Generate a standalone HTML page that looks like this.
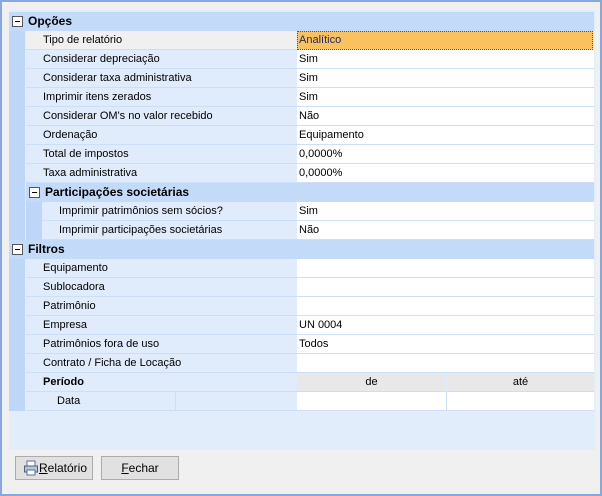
<html><head><style>
body{margin:0;width:602px;height:496px;background:#f0f0f0;font-family:"Liberation Sans",sans-serif;font-size:11px;color:#000;position:relative;overflow:hidden}
.b{position:absolute;left:0;top:0;width:598px;height:492px;border:2px solid #86a8dc}
.p{position:absolute;left:9px;top:10px;width:586px;height:440px;background:#e2edfc}
.bar{position:absolute;background:#bed7f8}
.r{position:absolute;height:18px;line-height:18px;border-bottom:1px solid #cddff6}
.l{background:#e0ebfb}
.v{background:#fff}
.h{position:absolute;background:#c3dbf9;height:19px;line-height:19px;font-weight:bold;font-size:12px}
.m{position:absolute;width:9px;height:9px;border:1px solid #555;background:#fff;top:4px}
.m:after{content:"";position:absolute;left:2px;top:4px;width:5px;height:1px;background:#000}
.btn{position:absolute;top:456px;height:22px;border:1px solid #adadad;background:#e1e1e1;line-height:22px;text-align:center;font-size:12px}
u{text-decoration:underline}
</style></head><body>
<div class="b"></div>
<div class="p"></div>
<div class="bar" style="left:9px;top:31px;width:16px;height:380px"></div>
<div class="bar" style="left:26px;top:202px;width:16px;height:38px"></div>

<div class="h" style="left:9px;top:12px;width:585px"><div class="m" style="left:3px"></div><span style="position:absolute;left:19px">Opções</span></div>

<div class="r l" style="left:26px;top:31px;width:271px;background:#f0f0f0"><span style="margin-left:17px">Tipo de relatório</span></div>
<div class="r" style="left:297px;top:31px;width:296px;background:#f9c25e;outline:1px dotted #555;outline-offset:-1px"><span style="margin-left:2px;color:#1c2a6a">Analítico</span></div>

<div id="rows"></div>
<script></script>

<div class="r l" style="left:26px;top:50px;width:271px"><span style="margin-left:17px">Considerar depreciação</span></div><div class="r v" style="left:297px;top:50px;width:297px"><span style="margin-left:2px">Sim</span></div>
<div class="r l" style="left:26px;top:69px;width:271px"><span style="margin-left:17px">Considerar taxa administrativa</span></div><div class="r v" style="left:297px;top:69px;width:297px"><span style="margin-left:2px">Sim</span></div>
<div class="r l" style="left:26px;top:88px;width:271px"><span style="margin-left:17px">Imprimir itens zerados</span></div><div class="r v" style="left:297px;top:88px;width:297px"><span style="margin-left:2px">Sim</span></div>
<div class="r l" style="left:26px;top:107px;width:271px"><span style="margin-left:17px">Considerar OM's no valor recebido</span></div><div class="r v" style="left:297px;top:107px;width:297px"><span style="margin-left:2px">Não</span></div>
<div class="r l" style="left:26px;top:126px;width:271px"><span style="margin-left:17px">Ordenação</span></div><div class="r v" style="left:297px;top:126px;width:297px"><span style="margin-left:2px">Equipamento</span></div>
<div class="r l" style="left:26px;top:145px;width:271px"><span style="margin-left:17px">Total de impostos</span></div><div class="r v" style="left:297px;top:145px;width:297px"><span style="margin-left:2px">0,0000%</span></div>
<div class="r l" style="left:26px;top:164px;width:271px"><span style="margin-left:17px">Taxa administrativa</span></div><div class="r v" style="left:297px;top:164px;width:297px"><span style="margin-left:2px">0,0000%</span></div>

<div class="h" style="left:26px;top:183px;width:568px"><div class="m" style="left:3px"></div><span style="position:absolute;left:19px">Participações societárias</span></div>
<div class="r l" style="left:42px;top:202px;width:255px"><span style="margin-left:17px">Imprimir patrimônios sem sócios?</span></div><div class="r v" style="left:297px;top:202px;width:297px"><span style="margin-left:2px">Sim</span></div>
<div class="r l" style="left:42px;top:221px;width:255px"><span style="margin-left:17px">Imprimir participações societárias</span></div><div class="r v" style="left:297px;top:221px;width:297px"><span style="margin-left:2px">Não</span></div>

<div class="h" style="left:9px;top:240px;width:585px"><div class="m" style="left:3px"></div><span style="position:absolute;left:19px">Filtros</span></div>
<div class="r l" style="left:26px;top:259px;width:271px"><span style="margin-left:17px">Equipamento</span></div><div class="r v" style="left:297px;top:259px;width:297px"></div>
<div class="r l" style="left:26px;top:278px;width:271px"><span style="margin-left:17px">Sublocadora</span></div><div class="r v" style="left:297px;top:278px;width:297px"></div>
<div class="r l" style="left:26px;top:297px;width:271px"><span style="margin-left:17px">Patrimônio</span></div><div class="r v" style="left:297px;top:297px;width:297px"></div>
<div class="r l" style="left:26px;top:316px;width:271px"><span style="margin-left:17px">Empresa</span></div><div class="r v" style="left:297px;top:316px;width:297px"><span style="margin-left:2px">UN 0004</span></div>
<div class="r l" style="left:26px;top:335px;width:271px"><span style="margin-left:17px">Patrimônios fora de uso</span></div><div class="r v" style="left:297px;top:335px;width:297px"><span style="margin-left:2px">Todos</span></div>
<div class="r l" style="left:26px;top:354px;width:271px"><span style="margin-left:17px">Contrato / Ficha de Locação</span></div><div class="r v" style="left:297px;top:354px;width:297px"></div>
<div class="r l" style="left:26px;top:373px;width:271px;font-weight:bold"><span style="margin-left:17px">Período</span></div>
<div class="r" style="left:297px;top:373px;width:149px;background:#e8e8e8;text-align:center">de</div>
<div class="r" style="left:447px;top:373px;width:147px;background:#e8e8e8;text-align:center">até</div>
<div class="r l" style="left:26px;top:392px;width:149px;border-right:1px solid #cddff6"><span style="margin-left:31px">Data</span></div>
<div class="r l" style="left:176px;top:392px;width:121px"></div>
<div class="r v" style="left:297px;top:392px;width:149px;border-right:1px solid #cddff6"></div>
<div class="r v" style="left:447px;top:392px;width:147px"></div>

<div class="btn" style="left:15px;width:76px"><svg width="16" height="16" style="position:absolute;left:7px;top:3px" viewBox="0 0 16 16"><rect x="4" y="1" width="8" height="5" fill="#fff" stroke="#5570a0"/><rect x="1.5" y="6" width="13" height="6" fill="#b8c4d8" stroke="#50607a"/><rect x="4" y="10" width="8" height="5" fill="#fff" stroke="#5570a0"/></svg><span style="margin-left:18px"><u>R</u>elatório</span></div>
<div class="btn" style="left:101px;width:76px"><u>F</u>echar</div>
</body></html>
